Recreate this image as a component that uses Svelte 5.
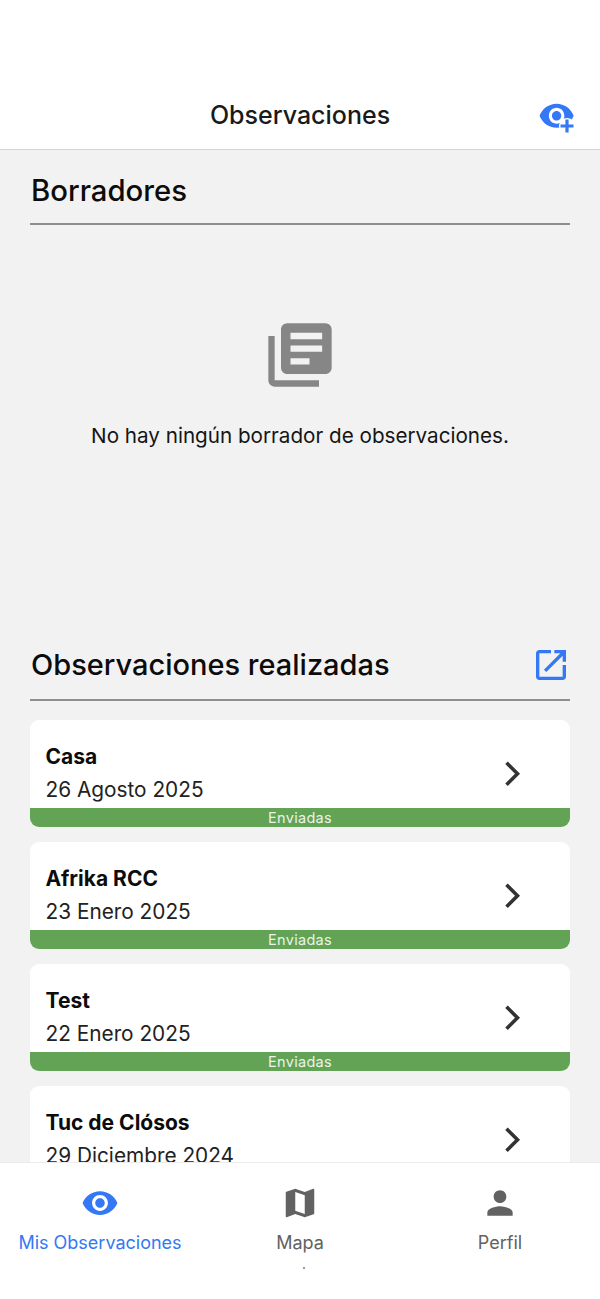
<script lang="ts">
  const observations = [
    { name: 'Casa', date: '26 Agosto 2025', status: 'Enviadas' },
    { name: 'Afrika RCC', date: '23 Enero 2025', status: 'Enviadas' },
    { name: 'Test', date: '22 Enero 2025', status: 'Enviadas' },
    { name: 'Tuc de Clósos', date: '29 Diciembre 2024', status: 'Enviadas' }
  ];

  const eyePath =
    'M12 4.5C7 4.5 2.73 7.61 1 12c1.73 4.39 6 7.5 11 7.5s9.27-3.11 11-7.5c-1.73-4.39-6-7.5-11-7.5zM12 17c-2.76 0-5-2.24-5-5s2.24-5 5-5 5 2.24 5 5-2.24 5-5 5zm0-8c-1.66 0-3 1.34-3 3s1.34 3 3 3 3-1.34 3-3-1.34-3-3-3z';
</script>

<div class="screen">
  <header class="topbar">
    <h1 class="topbar-title">Observaciones</h1>
    <button class="add-btn" aria-label="Nueva observación">
      <svg width="38" height="38" viewBox="0 0 38 38">
        <path d={eyePath} fill="#3478f6" transform="translate(0 -1.5) scale(1.55 1.6)" />
        <circle cx="29" cy="28" r="8" fill="#fff" />
        <path d="M29 21.5v13M22.5 28h13" stroke="#3478f6" stroke-width="3.2" fill="none" />
      </svg>
    </button>
  </header>

  <main class="content">
    <section class="drafts">
      <h2 class="section-title">Borradores</h2>
      <div class="empty">
        <svg width="76" height="76" viewBox="0 0 24 24" fill="#868686">
          <path d="M4 6H2v14c0 1.1.9 2 2 2h14v-2H4V6zm16-4H8c-1.1 0-2 .9-2 2v12c0 1.1.9 2 2 2h12c1.1 0 2-.9 2-2V4c0-1.1-.9-2-2-2zm-1 9H9V9h10v2zm-4 4H9v-2h6v2zm4-8H9V5h10v2z" />
        </svg>
        <p class="empty-text">No hay ningún borrador de observaciones.</p>
      </div>
    </section>

    <section>
      <div class="section-head">
        <h2 class="section-title">Observaciones realizadas</h2>
        <svg width="40" height="40" viewBox="0 0 24 24" fill="#3478f6">
          <path d="M19 19H5V5h7V3H5c-1.11 0-2 .9-2 2v14c0 1.1.89 2 2 2h14c1.1 0 2-.9 2-2v-7h-2v7zM14 3v2h3.59l-9.83 9.83 1.41 1.41L19 6.41V10h2V3h-7z" />
        </svg>
      </div>

      <div class="obs-list">
        {#each observations as obs}
          <article class="obs-card">
            <div class="obs-main">
              <div class="obs-info">
                <div class="obs-name">{obs.name}</div>
                <div class="obs-date">{obs.date}</div>
              </div>
              <svg class="chevron" width="18" height="26" viewBox="0 0 18 26" fill="none">
                <path d="M2.5 1.8 13.5 12.8 2.5 23.8" stroke="#333" stroke-width="3.6" />
              </svg>
            </div>
            <div class="obs-status">{obs.status}</div>
          </article>
        {/each}
      </div>
    </section>
  </main>

  <nav class="tabbar">
    <div class="tab active">
      <svg width="38" height="38" viewBox="0 0 24 24" fill="currentColor"><path d={eyePath} /></svg>
      <span>Mis Observaciones</span>
    </div>
    <div class="tab">
      <svg width="38" height="38" viewBox="0 0 24 24" fill="currentColor">
        <path d="M20.5 3l-.16.03L15 5.1 9 3 3.36 4.9c-.21.07-.36.25-.36.48V20.5c0 .28.22.5.5.5l.16-.03L9 18.9l6 2.1 5.64-1.9c.21-.07.36-.25.36-.48V3.5c0-.28-.22-.5-.5-.5zM15 19l-6-2.11V5l6 2.11V19z" />
      </svg>
      <span>Mapa</span>
      <i class="speck"></i>
    </div>
    <div class="tab">
      <svg width="38" height="38" viewBox="0 0 24 24" fill="currentColor">
        <path d="M12 12c2.21 0 4-1.79 4-4s-1.79-4-4-4-4 1.79-4 4 1.79 4 4 4zm0 2c-2.67 0-8 1.34-8 4v2h16v-2c0-2.66-5.33-4-8-4z" />
      </svg>
      <span>Perfil</span>
    </div>
  </nav>
</div>

<style>
  :global(body) {
    background: #fff;
  }

  .screen {
    width: 600px;
    height: 1299px;
    display: flex;
    flex-direction: column;
    overflow: hidden;
    font-family: Inter, 'Liberation Sans', sans-serif;
    color: #111;
    background: #f2f2f2;
  }

  .topbar {
    height: 150px;
    flex-shrink: 0;
    box-sizing: border-box;
    background: #fff;
    border-bottom: 1px solid #d4d4d4;
    display: flex;
    align-items: flex-end;
    justify-content: center;
    padding-bottom: 17px;
    position: relative;
  }

  .topbar-title {
    margin: 0;
    font-size: 25px;
    line-height: 34px;
    font-weight: 500;
    color: #1a1a1a;
  }

  .add-btn {
    position: absolute;
    left: 538px;
    top: 98px;
    width: 38px;
    height: 38px;
    padding: 0;
    border: 0;
    background: none;
  }

  .content {
    flex: 1;
    min-height: 0;
    overflow: hidden;
    padding: 0 30px;
  }

  .section-title {
    margin: 0;
    padding-left: 1px;
    font-size: 29.3px;
    line-height: 40px;
    font-weight: 500;
    color: #0c0c0c;
  }

  .drafts {
    height: 473px;
  }

  .drafts .section-title {
    padding-top: 21px;
    padding-bottom: 12px;
    border-bottom: 2px solid #8e8e8e;
  }

  .empty {
    display: flex;
    flex-direction: column;
    align-items: center;
    padding-top: 92px;
  }

  .empty-text {
    margin: 28px 0 0;
    font-size: 20.65px;
    line-height: 30px;
    color: #151515;
  }

  .section-head {
    display: flex;
    align-items: center;
    justify-content: space-between;
    height: 78px;
    box-sizing: border-box;
    padding-top: 8px;
    border-bottom: 2px solid #8e8e8e;
  }

  .section-head .section-title {
    font-size: 29px;
  }

  .section-head svg {
    margin-right: -1px;
  }

  .obs-list {
    display: flex;
    flex-direction: column;
    gap: 15px;
    margin-top: 19px;
  }

  .obs-card {
    height: 107px;
    flex-shrink: 0;
    display: flex;
    flex-direction: column;
    background: #fff;
    border-radius: 9px;
    overflow: hidden;
  }

  .obs-main {
    flex: 1;
    display: flex;
    align-items: center;
    justify-content: space-between;
    padding: 0 48px 0 15.5px;
  }

  .obs-info {
    padding-top: 18px;
  }

  .obs-name {
    font-size: 21px;
    line-height: 30px;
    font-weight: 700;
    color: #0c0c0c;
  }

  .obs-date {
    margin-top: 3px;
    font-size: 20.8px;
    line-height: 30px;
    color: #222;
  }

  .chevron {
    flex-shrink: 0;
    margin-top: 19px;
  }

  .obs-status {
    height: 19px;
    background: #62a356;
    color: #eaf4e8;
    font-size: 14.5px;
    line-height: 20px;
    text-align: center;
    letter-spacing: 0.3px;
  }

  .tabbar {
    height: 137px;
    flex-shrink: 0;
    box-sizing: border-box;
    background: #fff;
    border-top: 1px solid #ececec;
    display: grid;
    grid-template-columns: repeat(3, 1fr);
    position: relative;
    z-index: 1;
  }

  .tab {
    display: flex;
    flex-direction: column;
    align-items: center;
    padding-top: 21px;
    color: #626262;
    font-size: 18px;
    line-height: 24px;
    position: relative;
  }

  .tab span {
    margin-top: 9px;
  }

  .tab.active {
    color: #3478f6;
  }

  .speck {
    position: absolute;
    left: 103px;
    top: 104px;
    width: 2px;
    height: 2px;
    border-radius: 50%;
    background: #777;
  }
</style>
